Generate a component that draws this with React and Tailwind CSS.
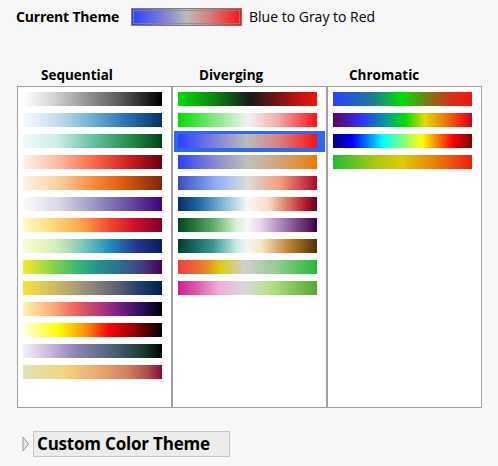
import React from "react";

const sequential = [
  "linear-gradient(to right, #ffffff, #d4d4d4 22%, #969696 45%, #5a5a5a 70%, #000000)",
  "linear-gradient(to right, #f7fbff, #c6dbef 25%, #6baed6 50%, #2171b5 75%, #08306b)",
  "linear-gradient(to right, #f2fafc, #ccece6 25%, #66c2a4 50%, #238b45 78%, #00441b)",
  "linear-gradient(to right, #fff2ec, #fcbba1 25%, #fb6a4a 50%, #d42020 75%, #67000d)",
  "linear-gradient(to right, #fff2e4, #fdd0a2 25%, #fd8d3c 50%, #e05a08 72%, #7f2704)",
  "linear-gradient(to right, #fbfafd, #dadaeb 25%, #9e9ac8 50%, #6a51a3 75%, #3f007d)",
  "linear-gradient(to right, #fffbc4, #fed976 22%, #fca54a 42%, #f5482a 62%, #d0102a 80%, #800026)",
  "linear-gradient(to right, #fbfdd4, #d9f0b4 22%, #7fcdbb 42%, #1d91c0 62%, #253494 82%, #081d58)",
  "linear-gradient(to right, #fde725, #8fd744 20%, #35b779 40%, #21918c 55%, #31688e 72%, #443983 87%, #440154)",
  "linear-gradient(to right, #f8e43a, #cbb564 25%, #8f8a7c 48%, #5c6070 68%, #1e3a6e 85%, #00204d)",
  "linear-gradient(to right, #fcf4b0, #fdb07a 20%, #f1605d 38%, #b73779 55%, #721f81 70%, #2c115f 85%, #000004)",
  "linear-gradient(to right, #ffffe4, #ffff00 25%, #ff9000 45%, #ff0000 62%, #8a0000 82%, #000000)",
  "linear-gradient(to right, #f6f0f9, #c9b5da 20%, #8d84b3 38%, #637090 55%, #3a5463 72%, #16362a 88%, #000000)",
  "linear-gradient(to right, #dfe3b6, #f4d47e 30%, #e9a86e 55%, #d77e5e 75%, #b04a4c 90%, #8b0638)",
];

const diverging = [
  "linear-gradient(to right, #00e000, #0a8a12 25%, #1a1a1a 52%, #781414 72%, #c81212 88%, #f51010)",
  "linear-gradient(to right, #00e000, #86ec86 28%, #f2f2f2 50%, #f4aaaa 72%, #ff1010)",
  "linear-gradient(to right, #2b40ff, #8484d6 28%, #bbbbbb 50%, #d88282 72%, #ff1010)",
  "linear-gradient(to right, #2b40ff, #8c8ccc 28%, #c0c0bc 50%, #d4a272 75%, #ec7a0a)",
  "linear-gradient(to right, #3b4cc0, #8db0fe 28%, #dddcdc 50%, #f49a7b 74%, #b40426)",
  "linear-gradient(to right, #053061, #2166ac 15%, #92c5de 35%, #f7f7f7 50%, #fddbc7 65%, #d6604d 82%, #b2182b 92%, #67001f)",
  "linear-gradient(to right, #00441b, #5aae61 25%, #d9f0d3 42%, #f7f7f7 50%, #e7d4e8 60%, #9970ab 78%, #40004b)",
  "linear-gradient(to right, #003c30, #35978f 25%, #c7eae5 42%, #f5f5f5 50%, #f6e8c3 60%, #bf812d 80%, #543005)",
  "linear-gradient(to right, #f23c46, #e8842a 20%, #dccc0c 30%, #d0d0d0 48%, #98cc98 70%, #22bb33)",
  "linear-gradient(to right, #d01f8c, #e070b8 18%, #f0b0d8 30%, #d8d8d8 48%, #b8e28c 65%, #52a82c)",
];

const chromatic = [
  "linear-gradient(to right, #2b40ff, #1e7a9a 28%, #00e000 50%, #7a7a14 68%, #d83018 85%, #f51010)",
  "linear-gradient(to right, #5e0060, #3030ff 20%, #009c9c 38%, #00e000 52%, #e0d800 66%, #f07000 82%, #f51010 95%, #b01020)",
  "linear-gradient(to right, #00007f, #0000ff 14%, #00ffff 36%, #ffff00 64%, #ff0000 86%, #800000)",
  "linear-gradient(to right, #22bb33, #a8c814 30%, #dccc00 50%, #ec8400 72%, #f51a10)",
];

function Column({ bars, selected }) {
  return (
    <div className="w-[155px] h-[322px] border border-[#a0a0a0] bg-white pt-[2px]">
      {bars.map((g, i) => (
        <div
          key={i}
          className={`mx-[1px] h-[21px] pt-[3px] pl-[4px] ${
            selected === i ? "bg-[#2b67fb]" : ""
          }`}
        >
          <div className="w-[139px] h-[14px]" style={{ background: g }} />
        </div>
      ))}
    </div>
  );
}

export default function App() {
  return (
    <div
      className="w-[498px] h-[466px] bg-[#f7f7f7] text-black relative"
      style={{ fontFamily: '"Open Sans", "Noto Sans", sans-serif' }}
    >
      <div className="flex items-center pt-[8px] pl-[16px] h-[25px]">
        <span className="font-bold text-[14px] tracking-[-0.2px] w-[115px]">Current Theme</span>
        <div className="w-[111px] h-[18px] border border-[#7c7c7c] p-[1px]"
          style={{ background: "linear-gradient(to right, #2b40ff, #8080d8 30%, #bbbbbb 50%, #d88080 70%, #ff1010)" }}>
          <div className="w-full h-full border border-[#8a8a8a]/80" />
        </div>
        <span className="ml-[7px] text-[14px]">Blue to Gray to Red</span>
      </div>

      <div className="flex mt-[40px] ml-[17px] text-[13.5px] font-bold h-[20px] items-center">
        <div className="w-[155px] pl-[24px]">Sequential</div>
        <div className="w-[155px] pl-[27px]">Diverging</div>
        <div className="w-[155px] pl-[22px]">Chromatic</div>
      </div>

      <div className="flex ml-[17px] mt-[1px]">
        <Column bars={sequential} />
        <Column bars={diverging} selected={2} />
        <Column bars={chromatic} />
      </div>

      <div className="flex items-center mt-[23px] ml-[22px]">
        <svg width="8" height="16" viewBox="0 0 8 16" className="mr-[3px]">
          <path d="M1 1 L6.5 8 L1 15 Z" fill="#e6e6e6" stroke="#9a9a9a" strokeWidth="1" />
        </svg>
        <div className="w-[197px] h-[26px] bg-[#ececec] border border-[#c6c6c6] pl-[3px] flex items-center font-bold text-[17px] tracking-[-0.2px]">
          Custom Color Theme
        </div>
      </div>
    </div>
  );
}
